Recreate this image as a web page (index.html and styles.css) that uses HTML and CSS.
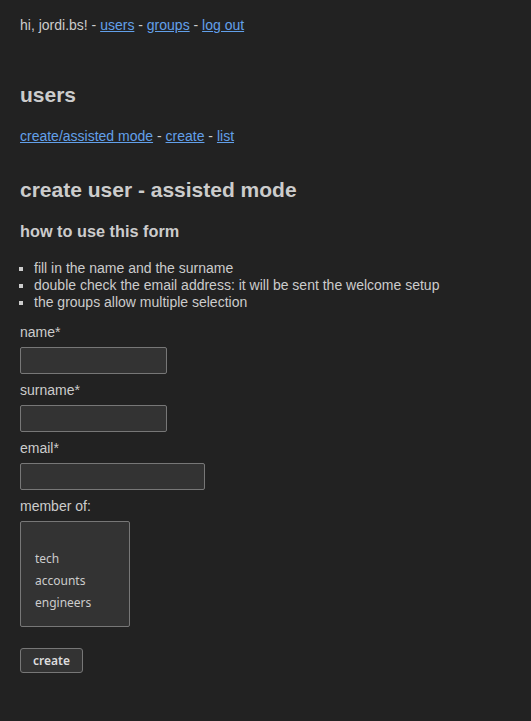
FILE: index.html
```html
<!DOCTYPE html>
<html>
<head>
<meta charset="utf-8">
<title>create user</title>
<link rel="stylesheet" href="styles.css">
</head>
<body>
<p class="topbar">hi, jordi.bs! - <a href="#">users</a> - <a href="#">groups</a> - <a href="#">log out</a></p>
<h1 class="section-title">users</h1>
<p class="subnav"><a href="#">create/assisted mode</a> - <a href="#">create</a> - <a href="#">list</a></p>
<h2 class="page-title">create user - assisted mode</h2>
<h3 class="help-title">how to use this form</h3>
<ul class="help-list">
  <li>fill in the name and the surname</li>
  <li>double check the email address: it will be sent the welcome setup</li>
  <li>the groups allow multiple selection</li>
</ul>
<form class="user-form">
  <label class="field-label" for="name">name*</label>
  <input class="text-input" id="name" type="text">
  <label class="field-label" for="surname">surname*</label>
  <input class="text-input" id="surname" type="text">
  <label class="field-label" for="email">email*</label>
  <input class="text-input wide" id="email" type="email">
  <label class="field-label" for="groups">member of:</label>
  <select class="group-select" id="groups" multiple>
    <option>tech</option>
    <option>accounts</option>
    <option>engineers</option>
  </select>
  <button class="submit-btn" type="button">create</button>
</form>
</body>
</html>
```
FILE: styles.css
```css
html { background: #222222; }
body {
  margin: 0;
  padding: 17px 20px 20px;
  background: #222222;
  color: #cccccc;
  font-family: "Liberation Sans", Arial, sans-serif;
  font-size: 14px;
  line-height: 16px;
}
a { color: #62a0ea; text-decoration: underline; }
.topbar { margin: 0; }
.section-title {
  margin: 50px 0 0;
  font-size: 21px;
  line-height: 24px;
  font-weight: bold;
}
.subnav { margin: 21px 0 0; }
.page-title {
  margin: 34px 0 0;
  font-size: 21px;
  line-height: 24px;
  font-weight: bold;
}
.help-title {
  margin: 20px 0 0;
  font-size: 16.3px;
  line-height: 18px;
  font-weight: bold;
}
.help-list {
  margin: 20px 0 0;
  padding-left: 14px;
  list-style: square;
  line-height: 17px;
}
.user-form { display: flex; flex-direction: column; align-items: flex-start; margin-top: 13px; }
.field-label { display: block; line-height: 16px; margin-top: 0; }
.text-input {
  box-sizing: border-box;
  width: 147px;
  height: 27px;
  margin: 7px 0 8px;
  background: #333333;
  border: 1px solid #777777;
  border-radius: 2px;
  color: #cccccc;
}
.text-input.wide { width: 185px; }
.group-select {
  box-sizing: border-box;
  width: 110px;
  height: 106px;
  margin: 7px 0 21px;
  padding: 28px 0 0 14px;
  background: #333333;
  border: 1px solid #777777;
  border-radius: 2px;
  color: #cccccc;
  font-family: "Noto Sans", sans-serif;
  font-size: 12px;
  overflow: hidden;
}
.group-select option { height: 22px; line-height: 22px; padding: 0; min-height: 0; }
.submit-btn {
  box-sizing: border-box;
  width: 63px;
  height: 25px;
  padding: 0;
  background: #333333;
  border: 1px solid #777777;
  border-radius: 3px;
  color: #dddddd;
  font-family: "Noto Sans", sans-serif;
  font-size: 12px;
  font-weight: 600;
}
```
